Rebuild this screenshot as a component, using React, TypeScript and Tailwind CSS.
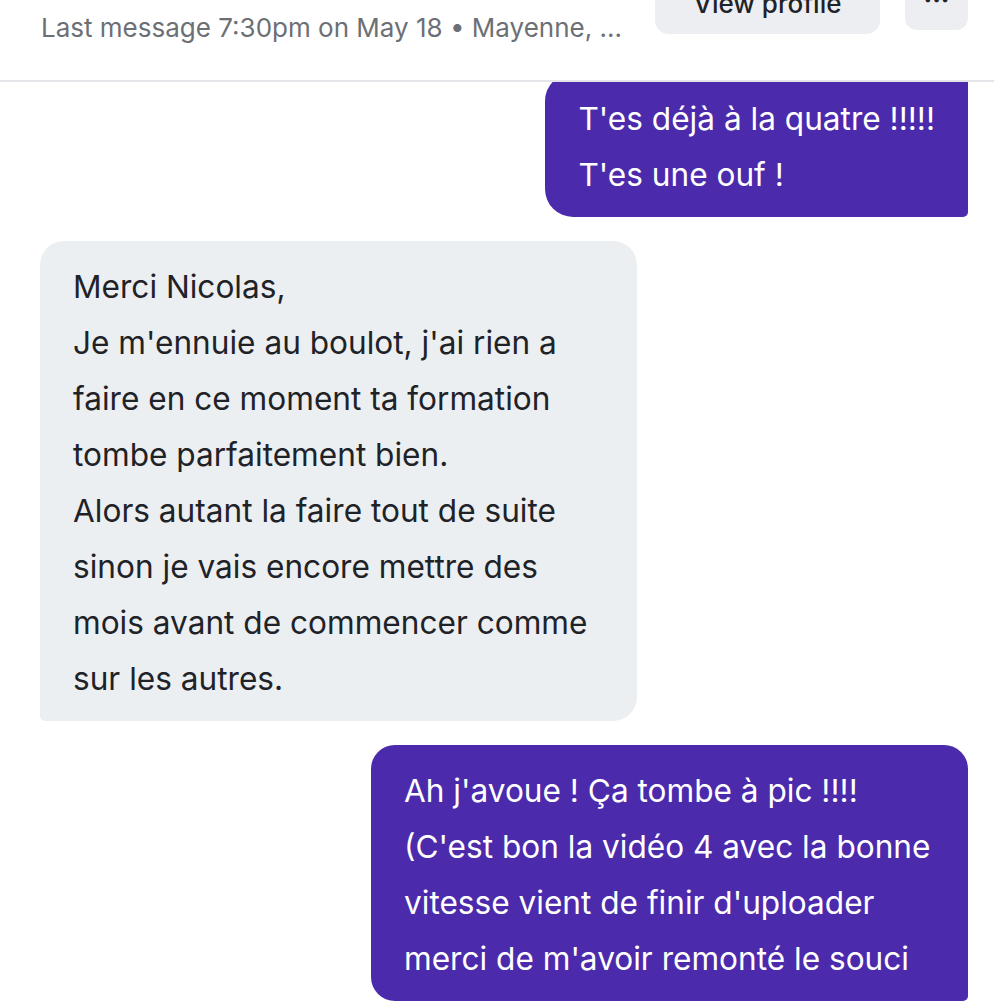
const font = { fontFamily: "Inter, 'Noto Sans', sans-serif" };

function Header() {
  return (
    <div className="h-[82px] shrink-0 border-b-2 border-[#e3e5e8] bg-white relative z-10">
      <div className="flex items-start justify-between pl-[41px] pr-[26px] -mt-[22px]">
        <div className="pt-[32px] text-[26px] leading-[36px] text-[#6c7075] whitespace-nowrap">
          Last message 7:30pm on May 18 • Mayenne, ...
        </div>
        <div className="flex items-start gap-[25px]">
          <button className="w-[225px] h-[56px] rounded-[14px] bg-[#eceef1] text-[26px] font-medium text-[#1f2328] flex items-center justify-center pb-[6px] whitespace-nowrap">
            View profile
          </button>
          <button className="w-[63px] h-[52px] rounded-[12px] bg-[#eceef1] text-[26px] font-bold text-[#1f2328] flex items-start justify-center pt-[2px]">
            ···
          </button>
        </div>
      </div>
    </div>
  );
}

function Bubble({ mine, lines, className }: { mine: boolean; lines: string[]; className?: string }) {
  return (
    <div
      className={
        (mine
          ? "self-end bg-[#4b2aab] text-white "
          : "self-start bg-[#eceff1] text-[#1f2328] ") +
        "max-w-[597px] px-[33px] pt-[18px] pb-[14px] text-[31.6px] leading-[56px] whitespace-nowrap " +
        (className ?? "")
      }
    >
      {lines.map((l, i) => (
        <div key={i}>{l}</div>
      ))}
    </div>
  );
}

export default function App() {
  return (
    <div className="w-[994px] h-[1004px] overflow-hidden bg-white flex flex-col" style={font}>
      <Header />
      <div className="flex flex-col gap-[24px] pl-10 pr-[26px] -mt-[9px]">
        <Bubble
          mine
          className="rounded-l-[28px] rounded-r-[5px]"
          lines={["T'es déjà à la quatre !!!!!", "T'es une ouf !"]}
        />
        <Bubble
          mine={false}
          className="w-[597px] rounded-[24px] rounded-bl-[5px]"
          lines={[
            "Merci Nicolas,",
            "Je m'ennuie au boulot, j'ai rien a",
            "faire en ce moment ta formation",
            "tombe parfaitement bien.",
            "Alors autant la faire tout de suite",
            "sinon je vais encore mettre des",
            "mois avant de commencer comme",
            "sur les autres.",
          ]}
        />
        <Bubble
          mine
          className="w-[597px] rounded-[24px] rounded-br-[5px]"
          lines={[
            "Ah j'avoue ! Ça tombe à pic !!!!",
            "(C'est bon la vidéo 4 avec la bonne",
            "vitesse vient de finir d'uploader",
            "merci de m'avoir remonté le souci",
            "",
          ]}
        />
      </div>
    </div>
  );
}
